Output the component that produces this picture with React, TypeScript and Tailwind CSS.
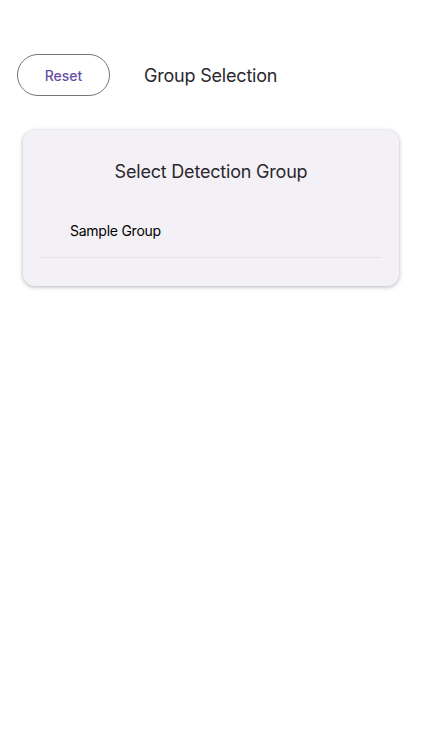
export default function App() {
  return (
    <div
      className="min-h-[750px] w-full bg-white"
      style={{ fontFamily: "Inter, Roboto, 'Noto Sans', sans-serif" }}
    >
      <div className="flex items-center pl-[17px] pt-[54px]">
        <button className="flex h-[42px] w-[93px] items-center justify-center rounded-full border border-[#79747e] text-[14px] font-medium text-[#6750a4]">
          Reset
        </button>
        <div className="ml-[34px] text-[18px] tracking-[-0.2px] text-[#2a282d]">Group Selection</div>
      </div>
      <div className="mx-[23px] mt-[34px] rounded-[12px] bg-[#f4f1f6] pb-[28px] pt-[29px] shadow-[0_1px_4px_rgba(0,0,0,0.3)]">
        <div className="text-center text-[18px] leading-[26px] tracking-[-0.2px] text-[#2a282d]">
          Select Detection Group
        </div>
        <div className="px-[17px] pt-[18px]">
          <div className="flex h-[54px] items-center pl-[30px] text-[14px] tracking-[-0.25px] text-black">
            Sample Group
          </div>
          <div className="h-px bg-[#e6e2e8]" />
        </div>
      </div>
    </div>
  );
}
